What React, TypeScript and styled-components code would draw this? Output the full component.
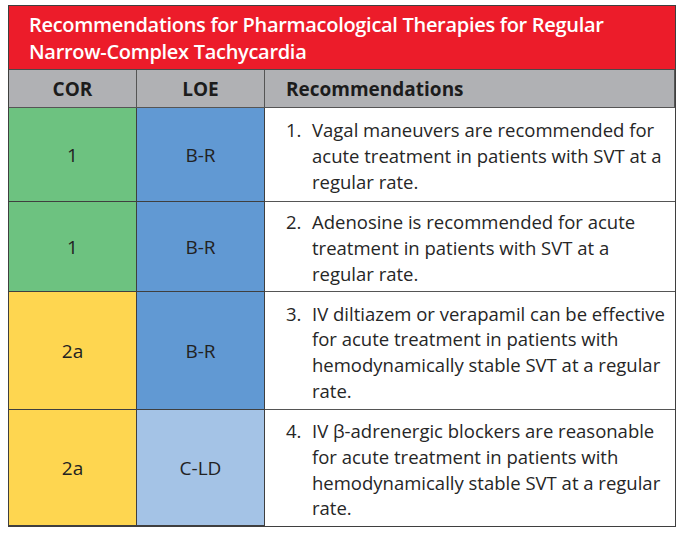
import styled, { createGlobalStyle } from "styled-components";

const GlobalStyle = createGlobalStyle`
  body {
    margin: 5px 0 0 8px;
    background: #ffffff;
    font-family: "Open Sans", "Liberation Sans", sans-serif;
  }
`;

const Table = styled.div`
  width: 668px;
  border: 1px solid #3f3f3f;
  box-sizing: border-box;
  display: grid;
  grid-template-columns: 128px 128px 1fr;
`;

const Title = styled.div`
  grid-column: 1 / -1;
  background-color: #ec1c2a;
  color: #ffffff;
  font-weight: 600;
  font-size: 20px;
  letter-spacing: -0.3px;
  line-height: 27px;
  padding: 5px 20px 1px 20px;
  height: 64px;
  box-sizing: border-box;
  border-bottom: 1px solid #4a4a4a;
`;

const HeadCell = styled.div<{ $align?: "center" | "left" }>`
  background-color: #b0b1b4;
  font-weight: 700;
  font-size: 19px;
  color: #1c1c1c;
  height: 38px;
  display: flex;
  align-items: center;
  justify-content: ${(p) => (p.$align === "left" ? "flex-start" : "center")};
  padding-left: ${(p) => (p.$align === "left" ? "21px" : "0")};
  border-right: 1px solid #555;
  border-bottom: 1px solid #555;
  box-sizing: border-box;

  &:last-of-type {
    border-right: none;
  }
`;

const LevelCell = styled.div<{ $bg: string; $h: number }>`
  background-color: ${(p) => p.$bg};
  height: ${(p) => p.$h}px;
  display: flex;
  align-items: center;
  justify-content: center;
  font-size: 19px;
  color: #222;
  border-right: 1px solid #3f3f3f;
  border-bottom: 1px solid #3f3f3f;
  box-sizing: border-box;
`;

const TextCell = styled.div<{ $h: number; $last?: boolean }>`
  height: ${(p) => p.$h}px;
  display: flex;
  align-items: center;
  padding: 3px 8px 0 21px;
  border-bottom: ${(p) => (p.$last ? "none" : "1px solid #555")};
  box-sizing: border-box;
  font-size: 18.5px;
  line-height: 25.7px;
  color: #262626;
`;

const Item = styled.div`
  display: flex;
`;

const Num = styled.span`
  width: 26px;
  flex: none;
`;

const colors = {
  green: "#6dc280",
  blue: "#6199d3",
  lightBlue: "#a4c3e6",
  yellow: "#fed650",
};

const rows = [
  {
    cor: "1",
    corBg: colors.green,
    loe: "B-R",
    loeBg: colors.blue,
    h: 94,
    text: "Vagal maneuvers are recommended for acute treatment in patients with SVT at a regular rate.",
  },
  {
    cor: "1",
    corBg: colors.green,
    loe: "B-R",
    loeBg: colors.blue,
    h: 90,
    text: "Adenosine is recommended for acute treatment in patients with SVT at a regular rate.",
  },
  {
    cor: "2a",
    corBg: colors.yellow,
    loe: "B-R",
    loeBg: colors.blue,
    h: 118,
    text: "IV diltiazem or verapamil can be effective for acute treatment in patients with hemodynamically stable SVT at a regular rate.",
  },
  {
    cor: "2a",
    corBg: colors.yellow,
    loe: "C-LD",
    loeBg: colors.lightBlue,
    h: 116,
    text: "IV \u03b2-adrenergic blockers are reasonable for acute treatment in patients with hemodynamically stable SVT at a regular rate.",
  },
];

export default function App() {
  return (
    <>
      <GlobalStyle />
      <Table>
        <Title>
          Recommendations for Pharmacological Therapies for Regular
          <br />
          Narrow-Complex Tachycardia
        </Title>
        <HeadCell>COR</HeadCell>
        <HeadCell>LOE</HeadCell>
        <HeadCell $align="left">Recommendations</HeadCell>
        {rows.map((r, i) => (
          <>
            <LevelCell key={`c${i}`} $bg={r.corBg} $h={r.h}>
              {r.cor}
            </LevelCell>
            <LevelCell key={`l${i}`} $bg={r.loeBg} $h={r.h}>
              {r.loe}
            </LevelCell>
            <TextCell key={`t${i}`} $h={r.h} $last={i === rows.length - 1}>
              <Item>
                <Num>{i + 1}.</Num>
                <span>{r.text}</span>
              </Item>
            </TextCell>
          </>
        ))}
      </Table>
    </>
  );
}
